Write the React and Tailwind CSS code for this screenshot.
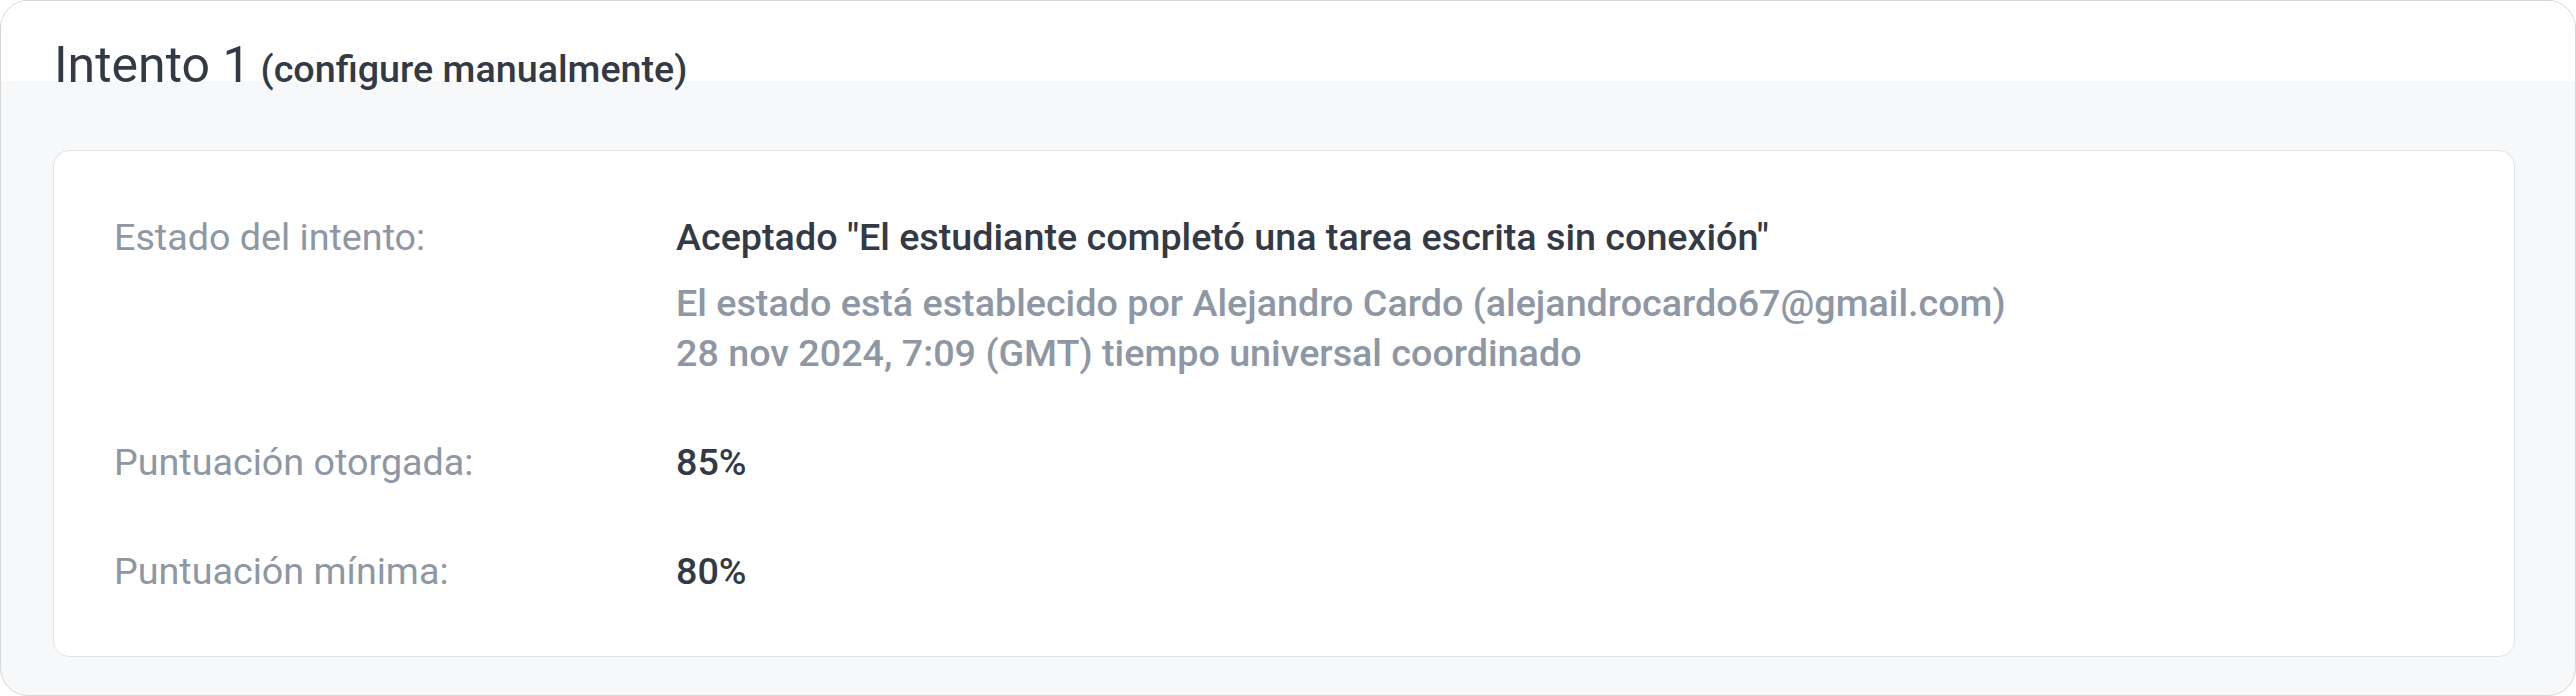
export default function App() {
  const font = { fontFamily: "Roboto, 'Liberation Sans', sans-serif" };
  return (
    <div className="w-[2576px] h-[696px] bg-white" style={font}>
      <div className="h-[696px] rounded-[28px] border-[1.6px] border-[#d6d6d6] overflow-hidden flex flex-col bg-[#f7f8fa]">
        <div className="h-[80px] shrink-0 bg-white pl-[53px] pt-[40px]">
          <h2 className="leading-[48px] text-[50px] font-normal text-[#343a45] whitespace-nowrap">
            Intento 1
            <span className="ml-[10px] text-[37.7px] font-medium">(configure manualmente)</span>
          </h2>
        </div>
        <div className="flex-1 pt-[69px] pb-[38px] pl-[52px] pr-[60px]">
          <div className="h-full rounded-[16px] border-[1.6px] border-[#e1e2e5] bg-white pl-[60px] pt-[61px] text-[37.7px] leading-[50px]">
            <div className="grid grid-cols-[562px_1fr] gap-y-[59px]">
              <div className="text-[#8e97a3]">Estado del intento:</div>
              <div>
                <div className="font-medium text-[#343a45]">Aceptado "El estudiante completó una tarea escrita sin conexión"</div>
                <div className="mt-[16px] font-medium text-[#8e97a3]">
                  <div>El estado está establecido por Alejandro Cardo (alejandrocardo67@gmail.com)</div>
                  <div>28 nov 2024, 7:09 (GMT) tiempo universal coordinado</div>
                </div>
              </div>
              <div className="text-[#8e97a3]">Puntuación otorgada:</div>
              <div className="font-medium text-[#343a45]">85%</div>
              <div className="text-[#8e97a3]">Puntuación mínima:</div>
              <div className="font-medium text-[#343a45]">80%</div>
            </div>
          </div>
        </div>
      </div>
    </div>
  );
}
